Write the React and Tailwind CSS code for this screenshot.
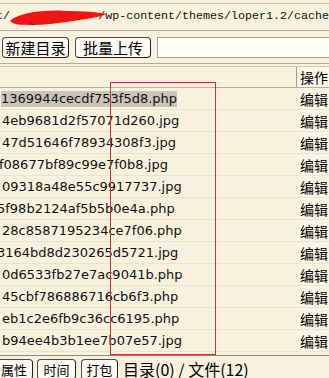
export default function App() {
  const files = [
    { name: "1369944cecdf753f5d8.php", off: "ml-[1px]", sel: true },
    { name: "4eb9681d2f57071d260.jpg", off: "ml-[2px]" },
    { name: "47d51646f78934308f3.jpg", off: "ml-[2px]" },
    { name: "f08677bf89c99e7f0b8.jpg", off: "ml-[-1px]" },
    { name: "09318a48e55c9917737.jpg", off: "ml-[2px]" },
    { name: "5f98b2124af5b5b0e4a.php", off: "ml-[-3px]" },
    { name: "28c8587195234ce7f06.php", off: "ml-[2px]" },
    { name: "3164bd8d230265d5721.jpg", off: "ml-[-3px]" },
    { name: "0d6533fb27e7ac9041b.php", off: "ml-[2px]" },
    { name: "45cbf786886716cb6f3.php", off: "ml-[2px]" },
    { name: "eb1c2e6fb9c36cc6195.php", off: "ml-[2px]" },
    { name: "b94ee4b3b1ee7b07e57.jpg", off: "ml-[2px]" },
  ];
  const cjk = { fontFamily: '"Noto Sans CJK SC", "DejaVu Sans", sans-serif' };
  const btn =
    "h-[21px] flex items-center justify-center rounded-[4px] border border-[#4a4a48] border-r-[#222] border-b-[#222] bg-[#fcfaf2] leading-none";
  return (
    <div
      className="relative w-[329px] h-[378px] overflow-hidden bg-[#f7f1de] text-black"
      style={cjk}
    >
      {/* path row */}
      <div className="h-[3px]" />
      <div className="border-t border-[#c9c0a6]" />
      <div
        className="h-[26px] flex items-center whitespace-nowrap overflow-hidden text-[11.67px] text-[#111]"
        style={{ fontFamily: '"Liberation Mono", monospace' }}
      >
        <span className="ml-[-4px]">t/</span>
        <span className="inline-block w-[89px]" />
        <span>/wp-content/themes/loper1.2/cache</span>
      </div>
      <svg
        className="absolute left-[8px] top-[8px]"
        width="100"
        height="20"
        viewBox="0 0 102 20"
      >
        <path
          d="M2,13 C10,6 28,2 55,2.5 C78,3 92,3.5 100,6 C96,8.5 86,10 70,12.5 C52,15.5 34,17.5 16,17 C9,16.8 4,15.5 2,13 Z"
          fill="#f01414"
        />
        <path d="M23,15 q2,3 5,1" stroke="#333" strokeWidth="1" fill="none" />
      </svg>
      <div className="border-t border-[#b3ab95]" />

      {/* buttons row */}
      <div className="h-[32px] flex items-center">
        <div className={`${btn} ml-[2px] w-[67px] text-[15px]`}>新建目录</div>
        <div className={`${btn} ml-[6px] w-[76px] text-[15px]`}>批量上传</div>
        <div className="ml-[6px] h-[21px] flex-1 mr-[-4px] border border-[#a7a192] bg-[#fffdf6]" />
      </div>
      <div className="border-t border-[#b3ab95]" />
      <div className="h-[2px]" />
      <div className="border-t border-[#cfc6ad]" />

      {/* header */}
      <div className="h-[21px] flex border-b border-[#b7af98]">
        <div className="flex-1 border-r border-[#a39c87]" />
        <div className="w-[32px] flex items-center pl-[3px] text-[14px] bg-[#fbf8ec] leading-none">
          操作
        </div>
      </div>

      {/* rows */}
      {files.map((f, i) => (
        <div key={i} className="h-[22px] flex border-b border-[#ece3c8]">
          <div className="flex-1 flex items-center overflow-hidden whitespace-nowrap">
            <span
              className={`${f.off} text-[13px] leading-[16px] text-[#111] ${
                f.sel ? "bg-[#c9c5b9]" : ""
              }`}
              style={{ fontFamily: '"DejaVu Sans", sans-serif' }}
            >
              {f.name}
            </span>
          </div>
          <div className="w-[32px] flex items-center pl-[3px] text-[14px] leading-none bg-[#f9f5e6]">
            编辑
          </div>
        </div>
      ))}

      <div className="h-[3px]" />
      <div className="border-t border-[#8f8a7c]" />

      {/* bottom bar */}
      <div className="h-[24px] flex items-start pt-[3px] whitespace-nowrap">
        <div className={`${btn} ml-[-5px] w-[38px] text-[13px]`}>属性</div>
        <div className={`${btn} ml-[4px] w-[39px] text-[13px]`}>时间</div>
        <div className={`${btn} ml-[5px] w-[37px] text-[13px]`}>打包</div>
        <div className="ml-[5px] text-[16px] leading-[21px]">目录(0) / 文件(12)</div>
      </div>

      {/* red highlight rectangle overlay */}
      <div className="absolute left-[110px] top-[82px] w-[106px] h-[273px] border border-[#bd3a33] pointer-events-none" />
    </div>
  );
}
